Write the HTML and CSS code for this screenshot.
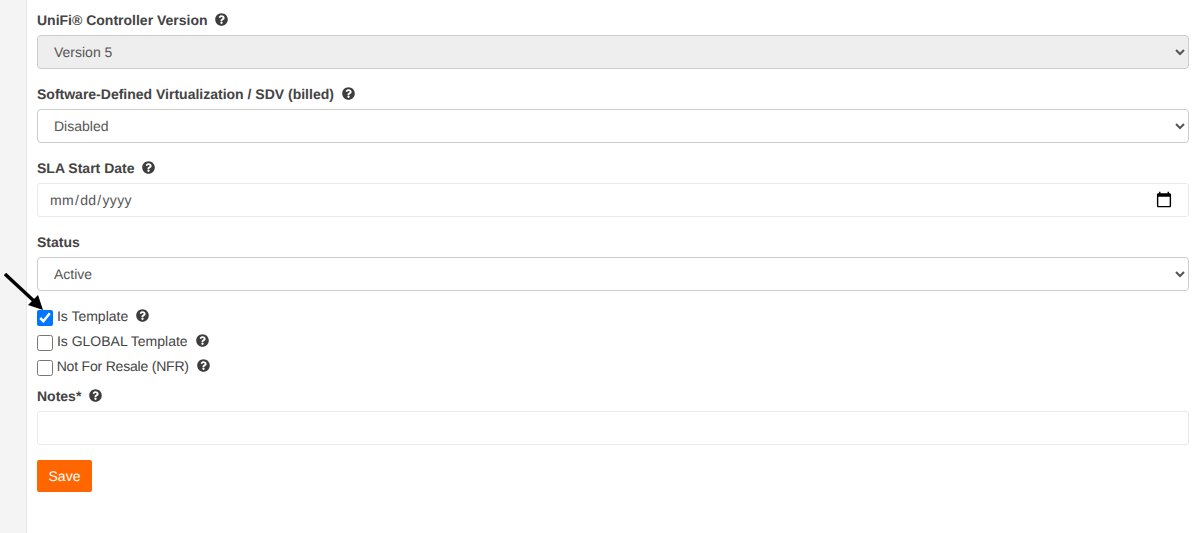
FILE: index.html
```html
<!DOCTYPE html>
<html lang="en">
<head>
    <meta charset="UTF-8" />
    <meta name="viewport" content="width=device-width, initial-scale=1" />
    <title>Edit Template</title>
    <link rel="stylesheet" href="styles.css">
</head>
<body>
    <svg width="0" height="0" class="defs">
        <symbol id="help" viewBox="0 0 512 512">
            <path d="M504 256c0 136.997-111.043 248-248 248S8 392.997 8 256C8 119.083 119.043 8 256 8s248 111.083 248 248zM262.655 90c-54.497 0-89.255 22.957-116.549 63.758-3.536 5.286-2.353 12.415 2.715 16.258l34.699 26.31c5.205 3.947 12.621 3.008 16.665-2.122 17.864-22.658 30.113-35.797 57.303-35.797 20.429 0 45.698 13.148 45.698 32.958 0 14.976-12.363 22.667-32.534 33.976C247.128 238.528 216 254.941 216 296v4c0 6.627 5.373 12 12 12h56c6.627 0 12-5.373 12-12v-1.333c0-28.462 83.186-29.647 83.186-106.667 0-58.002-60.165-102-116.531-102zM256 338c-25.365 0-46 20.635-46 46 0 25.364 20.635 46 46 46s46-20.636 46-46c0-25.365-20.635-46-46-46z"/>
        </symbol>
    </svg>
    <div class="layout">
        <div class="sidebar"></div>
        <form class="content">
            <div class="form-group">
                <label class="field-label">UniFi® Controller Version <svg class="help"><use href="#help"/></svg></label>
                <select class="form-control" disabled>
                    <option>Version 5</option>
                </select>
            </div>
            <div class="form-group">
                <label class="field-label">Software-Defined Virtualization / SDV (billed) <svg class="help"><use href="#help"/></svg></label>
                <select class="form-control">
                    <option>Disabled</option>
                </select>
            </div>
            <div class="form-group">
                <label class="field-label">SLA Start Date <svg class="help"><use href="#help"/></svg></label>
                <input class="form-control plain date" type="date">
            </div>
            <div class="form-group">
                <label class="field-label">Status</label>
                <select class="form-control">
                    <option>Active</option>
                </select>
            </div>

            <div class="checks">
                <svg class="arrow" width="44" height="44" viewBox="0 0 44 44">
                    <path d="M1 1 L30 28" stroke="#000" stroke-width="3.4" fill="none"/>
                    <path d="M39 37 L24 32 L34 22 Z" fill="#000"/>
                </svg>
                <label class="check"><input type="checkbox" checked> Is Template <svg class="help"><use href="#help"/></svg></label>
                <label class="check"><input type="checkbox"> Is GLOBAL Template <svg class="help"><use href="#help"/></svg></label>
                <label class="check tight"><input type="checkbox"> Not For Resale (NFR) <svg class="help"><use href="#help"/></svg></label>
            </div>

            <div class="form-group notes">
                <label class="field-label">Notes* <svg class="help"><use href="#help"/></svg></label>
                <input class="form-control plain" type="text">
            </div>
            <button class="btn-save" type="button">Save</button>
        </form>
    </div>
</body>
</html>
```

FILE: styles.css
```css
html, body {
    height: 100%;
}
body {
    font-family: 'Liberation Sans', Arial, sans-serif;
    font-size: 14px;
    background: #fff;
    margin: 0;
    color: #444;
    overflow: hidden;
    text-rendering: geometricPrecision;
}
.defs {
    position: absolute;
}
.layout {
    display: flex;
    height: 100%;
}
.sidebar {
    width: 26px;
    background: #f4f4f4;
    border-right: 1px solid #e7e7e7;
    flex-shrink: 0;
}
.content {
    flex: 1;
    padding: 10px 10px 0;
}
.form-group {
    margin-bottom: 15px;
}
.field-label {
    display: block;
    font-weight: 700;
    line-height: 20px;
    margin-bottom: 5px;
}
.help {
    width: 13px;
    height: 13px;
    margin-left: 4px;
    vertical-align: -1px;
    fill: #3e3e3e;
}
.form-control {
    display: block;
    width: 100%;
    height: 34px;
    box-sizing: border-box;
    padding: 6px 12px;
    font-family: inherit;
    font-size: 14px;
    color: #555;
    background-color: #fff;
    border: 1px solid #ccc;
    border-radius: 4px;
    text-rendering: geometricPrecision;
}
.form-control:disabled {
    background-color: #eee;
    opacity: 1;
}
.form-control.plain {
    border-color: #e9e9e9;
    border-radius: 3px;
}
.date::-webkit-datetime-edit {
    margin-left: -1px;
    letter-spacing: 0.3px;
}
.date::-webkit-calendar-picker-indicator {
    width: 18px;
    height: 18px;
    margin-right: 3px;
    padding: 0;
}
.checks {
    position: relative;
    margin-top: -2px;
}
.check {
    display: block;
    height: 25px;
    line-height: 25px;
}
.check.tight {
    letter-spacing: -0.2px;
}
.check input {
    width: 16px;
    height: 16px;
    margin: 0;
    vertical-align: -5px;
}
.arrow {
    position: absolute;
    left: -33px;
    top: -31px;
}
.notes {
    margin-top: 7px;
    margin-bottom: 15px;
}
.btn-save {
    width: 55px;
    height: 32px;
    padding: 0;
    font-family: inherit;
    font-size: 14px;
    color: #fff;
    background: #ff6600;
    border: none;
    border-radius: 2px;
    text-rendering: geometricPrecision;
}
```
